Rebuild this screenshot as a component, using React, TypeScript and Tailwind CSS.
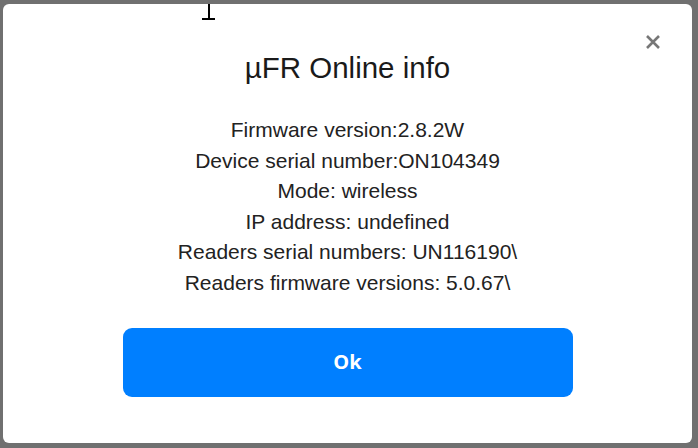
import { useState } from "react";

const info = [
  "Firmware version:2.8.2W",
  "Device serial number:ON104349",
  "Mode: wireless",
  "IP address: undefined",
  "Readers serial numbers: UN116190\\",
  "Readers firmware versions: 5.0.67\\",
];

const App = () => {
  const [open] = useState(true);

  return (
    <div className="w-[698px] h-[448px] bg-[#707070] pt-[4px] pl-[3px] pr-[6px] pb-[5px] font-['Liberation_Sans',Arial,sans-serif]">
      {open && (
        <div className="relative w-full h-full bg-white rounded-[6px] flex flex-col items-center">
          {/* text cursor */}
          <div className="absolute left-[199px] top-0 w-[13px] h-[16px] flex flex-col items-center">
            <div className="w-[2px] h-[14px] bg-black" />
            <div className="w-[13px] h-[2px] bg-black" />
          </div>
          <button className="absolute right-[31px] top-[30px] text-[#777] cursor-pointer">
            <svg width="16" height="16" viewBox="0 0 16 16">
              <path d="M2 2 L14 14 M14 2 L2 14" stroke="currentColor" strokeWidth="2.6" />
            </svg>
          </button>
          <h2 className="mt-[46px] text-[29.5px] leading-[36px] text-[#1a1a1a]">
            µFR Online info
          </h2>
          <div className="mt-[29px] flex flex-col items-center text-[21px] leading-[30.6px] text-[#222]">
            {info.map((line, i) => (
              <p key={i}>{line}</p>
            ))}
          </div>
          <button className="mt-[29px] w-[450px] h-[69px] rounded-[9px] bg-[#007fff] text-white text-[20px] font-bold font-['Open_Sans',sans-serif]">
            Ok
          </button>
        </div>
      )}
    </div>
  );
};

export default App;
